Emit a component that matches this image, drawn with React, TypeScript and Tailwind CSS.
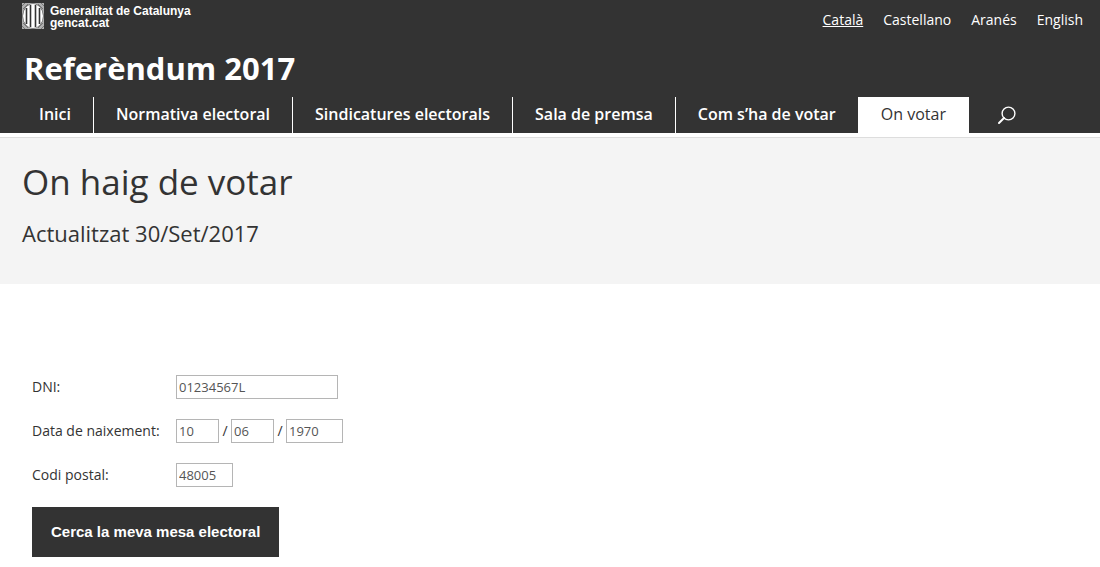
import React from "react";

const languages = ["Català", "Castellano", "Aranés", "English"];

const sections = [
  "Inici",
  "Normativa electoral",
  "Sindicatures electorals",
  "Sala de premsa",
  "Com s’ha de votar",
  "On votar",
];

function Shield() {
  return (
    <svg width="22" height="26" viewBox="0 0 22 26" aria-hidden="true">
      <rect width="22" height="26" fill="#b0b0b0" />
      <path
        d="M1 6L6 1M0 3L3 0M16 1l5 5M19 0l3 3M1 20l5 5M0 23l3 3M21 20l-5 5M22 23l-3 3"
        stroke="#777"
        strokeWidth="1"
      />
      <ellipse cx="11" cy="13" rx="10.5" ry="12.5" fill="#555" />
      <ellipse cx="11" cy="13" rx="10" ry="12" fill="#fff" />
      <path
        d="M4.5 5v16M8.5 2v22M13.5 2v22M17.5 5v16"
        stroke="#333"
        strokeWidth="1.6"
      />
    </svg>
  );
}

function Header() {
  return (
    <header className="bg-[#333] text-white">
      <div className="flex h-10 items-start justify-between pl-[22px] pr-[17px]">
        <a
          href="#gencat"
          className="flex gap-1.5 pt-[3px] font-['Liberation_Sans',sans-serif] text-[12px] font-bold leading-3"
        >
          <Shield />
          <span className="pt-[2px]">
            Generalitat de Catalunya
            <br />
            gencat.cat
          </span>
        </a>
        <nav aria-label="Idioma" className="flex gap-5 pt-2.5 text-[14px] leading-5">
          {languages.map((name, i) => (
            <a key={name} href={"#" + name} className={i === 0 ? "underline" : ""}>
              {name}
            </a>
          ))}
        </nav>
      </div>
      <p className="px-6 pb-1 pt-1 text-[31px] font-bold leading-[49px]">Referèndum 2017</p>
      <nav aria-label="Principal" className="flex h-9 pl-[17px] text-[16px] font-semibold leading-[34px]">
        {sections.map((name, i) => (
          <a
            key={name}
            href={"#" + name}
            className={
              i === 5
                ? "bg-white px-[23px] font-medium text-[#333]"
                : i === 4
                  ? "px-[22px]"
                  : "border-r border-white px-[22px]"
            }
          >
            {name}
          </a>
        ))}
        <button type="button" aria-label="Cerca" className="ml-7 flex items-center">
          <svg width="20" height="20" viewBox="0 0 20 20" fill="none" stroke="#fff">
            <circle cx="11.5" cy="8.5" r="6.4" strokeWidth="1.4" />
            <path d="M7 13l-5 5" strokeWidth="2" strokeLinecap="round" />
          </svg>
        </button>
      </nav>
    </header>
  );
}

const field = "h-6 border border-[#b5b5b5] bg-white px-0.5 text-[13px] text-[#555]";

export default function App() {
  return (
    <div className="bg-white font-['Open_Sans',sans-serif] text-[#333]">
      <Header />
      <section className="mt-1 border-t border-[#ddd] bg-[#f4f4f4] px-[22px] pb-[37px] pt-5">
        <h1 className="text-[35px] leading-[48px]">On haig de votar</h1>
        <p className="mt-[13px] text-[22px] leading-7">Actualitzat 30/Set/2017</p>
      </section>
      <form
        className="flex flex-col items-start gap-5 px-8 pb-2.5 pt-[91px] text-[14px] leading-6"
        onSubmit={(e) => e.preventDefault()}
      >
        <div className="flex">
          <label htmlFor="dni" className="w-36">DNI:</label>
          <input id="dni" defaultValue="01234567L" className={field + " w-[162px]"} />
        </div>
        <div className="flex">
          <label htmlFor="day" className="w-36">Data de naixement:</label>
          <div className="flex">
            <input id="day" defaultValue="10" className={field + " w-[43px]"} />
            <span className="w-3 text-center">/</span>
            <input aria-label="Mes" defaultValue="06" className={field + " w-[43px]"} />
            <span className="w-3 text-center">/</span>
            <input aria-label="Any" defaultValue="1970" className={field + " w-[57px]"} />
          </div>
        </div>
        <div className="flex">
          <label htmlFor="postal" className="w-36">Codi postal:</label>
          <input id="postal" defaultValue="48005" className={field + " w-[57px]"} />
        </div>
        <button
          type="submit"
          className="h-[50px] bg-[#333] px-[19px] font-['Liberation_Sans',sans-serif] text-[15px] font-bold text-white"
        >
          Cerca la meva mesa electoral
        </button>
      </form>
    </div>
  );
}
